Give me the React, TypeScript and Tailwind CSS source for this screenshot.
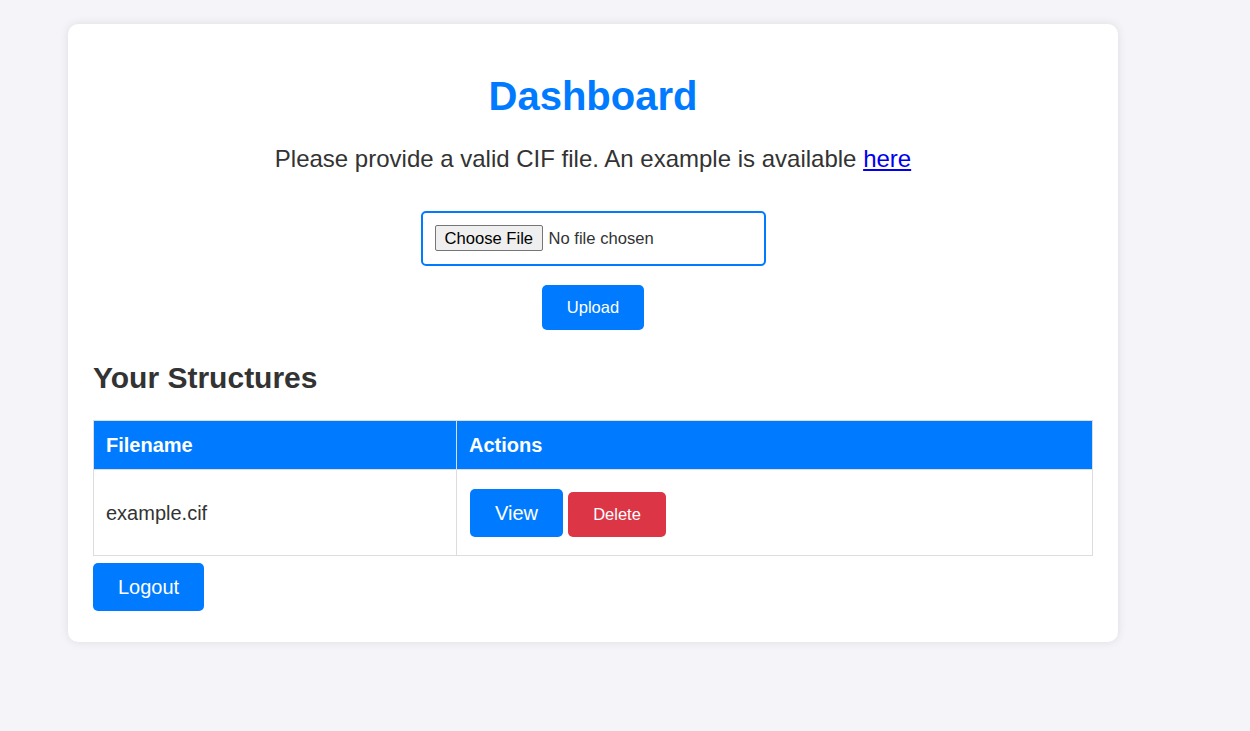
function Dashboard() {
    const files = ["example.cif"];

    return (
        <section className="min-h-screen bg-[#f4f4f9] pl-[68px] pt-[24px] font-['Liberation_Sans',Arial,sans-serif] text-[#333]">
            <div className="w-[1050px] rounded-[10px] bg-white px-[25px] pt-[49px] pb-[31px] shadow-[0_0_10px_rgba(0,0,0,0.1)]">
                <h1 className="text-center text-[40px] leading-[46px] font-bold text-[#007bff]">
                    Dashboard
                </h1>

                <p className="mt-[26px] text-center text-[24px] leading-[28px]">
                    Please provide a valid CIF file. An example is available{" "}
                    <a href="#" className="text-[#0000ee] underline">here</a>
                </p>

                <form
                    onSubmit={(e) => e.preventDefault()}
                    className="mt-[38px] flex flex-col items-center"
                >
                    <input
                        type="file"
                        className="w-[345px] rounded-[5px] border-2 border-[#007bff] px-[12px] py-[12px] text-[16.6px] leading-[26px] text-[#333] file:mr-[6px] file:h-[26px] file:w-[108px] file:rounded-[2px] file:border file:border-[#767676] file:bg-[#efefef] file:px-[9px] file:text-[16.6px] file:text-black"
                    />

                    <button
                        type="submit"
                        className="mt-[19px] h-[45px] w-[102px] rounded-[5px] bg-[#007bff] text-[16.5px] text-white"
                    >
                        Upload
                    </button>
                </form>

                <h2 className="mt-[31px] text-[30px] leading-[34px] font-bold">
                    Your Structures
                </h2>

                <table className="mt-[25px] w-[1000px] border-collapse text-[20px]">
                    <thead>
                        <tr className="h-[49px] bg-[#007bff] text-white">
                            <th className="w-[363px] border border-[#ddd] px-[12px] text-left font-bold">
                                Filename
                            </th>
                            <th className="border border-[#ddd] px-[12px] text-left font-bold">
                                Actions
                            </th>
                        </tr>
                    </thead>
                    <tbody>
                        {files.map((f) => (
                            <tr key={f} className="h-[86px]">
                                <td className="border border-[#ddd] px-[12px] align-middle">{f}</td>
                                <td className="border border-[#ddd] px-[13px] align-middle">
                                    <div className="flex items-end gap-[5px]">
                                        <button className="h-[48px] w-[93px] rounded-[5px] bg-[#007bff] text-[20px] text-white">
                                            View
                                        </button>
                                        <button className="h-[45px] w-[98px] rounded-[5px] bg-[#dc3545] text-[16.5px] text-white">
                                            Delete
                                        </button>
                                    </div>
                                </td>
                            </tr>
                        ))}
                    </tbody>
                </table>

                <button className="mt-[7px] h-[48px] w-[111px] rounded-[5px] bg-[#007bff] text-[20px] text-white">
                    Logout
                </button>
            </div>
        </section>
    );
}

export default function App() {
    return <Dashboard />;
}
